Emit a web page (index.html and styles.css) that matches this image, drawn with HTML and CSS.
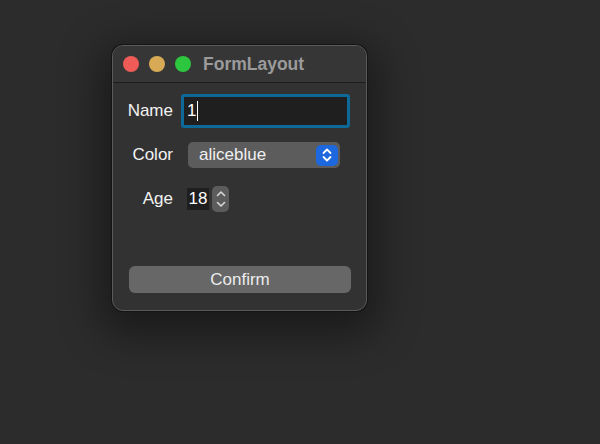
FILE: index.html
```html
<!DOCTYPE html>
<html>
<head>
<meta charset="utf-8">
<link rel="stylesheet" href="styles.css">
</head>
<body>
<div class="window">
  <div class="titlebar">
    <div class="lights">
      <span class="light red"></span>
      <span class="light yellow"></span>
      <span class="light green"></span>
    </div>
    <div class="title">FormLayout</div>
  </div>
  <div class="form">
    <label class="lbl">Name</label>
    <div class="field name-field"><span class="val">1</span><span class="caret"></span></div>
    <label class="lbl">Color</label>
    <div class="popup">
      <span class="popup-text">aliceblue</span>
      <span class="popup-btn">
        <svg width="12" height="16" viewBox="0 0 12 16"><path d="M2.5 6 L6 2.5 L9.5 6 M2.5 10 L6 13.5 L9.5 10" fill="none" stroke="#fff" stroke-width="1.8" stroke-linecap="round" stroke-linejoin="round"/></svg>
      </span>
    </div>
    <label class="lbl">Age</label>
    <div class="spin">
      <span class="spin-val">18</span>
      <span class="stepper">
        <svg width="12" height="22" viewBox="0 0 12 22"><path d="M2.5 7.5 L6 4 L9.5 7.5 M2.5 14.5 L6 18 L9.5 14.5" fill="none" stroke="#d8d8d8" stroke-width="1.6" stroke-linecap="round" stroke-linejoin="round"/></svg>
      </span>
    </div>
  </div>
  <div class="actions">
    <button class="confirm">Confirm</button>
  </div>
</div>
</body>
</html>
```
FILE: styles.css
```css
html, body {
  margin: 0;
  padding: 0;
}
body {
  width: 600px;
  height: 444px;
  background: #2c2c2c;
  font-family: "Liberation Sans", Arial, sans-serif;
  overflow: hidden;
  position: relative;
}
.window {
  position: absolute;
  left: 112px;
  top: 45px;
  width: 253px;
  height: 264px;
  background: #323232;
  border: 1px solid #5a5a5a;
  border-radius: 11px;
  box-shadow: 0 0 0 1px #141414, 0 12px 40px 12px rgba(0,0,0,0.4);
  display: flex;
  flex-direction: column;
  overflow: hidden;
}
.titlebar {
  height: 36px;
  border-bottom: 1px solid #1c1c1c;
  background: #363636;
  display: flex;
  align-items: center;
  padding-left: 10px;
}
.lights {
  display: flex;
  gap: 10px;
}
.light {
  width: 16px;
  height: 16px;
  border-radius: 50%;
  display: block;
}
.red { background: #ef5b56; }
.yellow { background: #d9aa55; }
.green { background: #2cc63f; }
.title {
  margin-left: 12px;
  color: #9b9b9b;
  font-weight: bold;
  font-size: 17.5px;
}
.form {
  display: grid;
  grid-template-columns: 60px 1fr;
  column-gap: 8px;
  padding: 11px 16px 0 0;
  align-items: center;
}
.lbl {
  justify-self: end;
  color: #f2f2f2;
  font-size: 17px;
}
.name-field {
  height: 28px;
  border: 3px solid #0d6a98;
  border-radius: 3px;
  background: #1f1f1f;
  display: flex;
  align-items: center;
  padding-left: 3px;
  color: #fff;
  font-size: 17px;
}
.caret {
  width: 1px;
  height: 20px;
  background: #fff;
  margin-left: 1px;
}
.popup {
  margin-top: 14px;
  margin-left: 7px;
  width: 152px;
  height: 26px;
  box-sizing: border-box;
  background: #5c5c5c;
  border-radius: 5px;
  display: flex;
  align-items: center;
  justify-content: space-between;
  padding: 0 2px 0 11px;
  color: #f0f0f0;
  font-size: 17px;
  grid-column: 2;
}
.form .lbl:nth-of-type(2) { margin-top: 14px; }
.popup-btn {
  width: 22px;
  height: 21px;
  background: #1d68de;
  border-radius: 5px;
  display: flex;
  align-items: center;
  justify-content: center;
}
.spin {
  margin-top: 18px;
  margin-left: 6px;
  display: flex;
  align-items: center;
  gap: 3px;
}
.form .lbl:nth-of-type(3) { margin-top: 18px; }
.spin-val {
  width: 22px;
  height: 22px;
  background: #1f1f1f;
  color: #fff;
  font-size: 17px;
  line-height: 22px;
  text-align: center;
}
.stepper {
  width: 17px;
  height: 26px;
  background: #5c5c5c;
  border-radius: 5px;
  display: flex;
  align-items: center;
  justify-content: center;
}
.actions {
  margin-top: auto;
  padding: 0 15px 17px 16px;
}
.confirm {
  width: 100%;
  height: 27px;
  border: none;
  border-radius: 6px;
  background: #676767;
  color: #ececec;
  font-family: "Liberation Sans", Arial, sans-serif;
  font-size: 17px;
  padding: 0;
  display: block;
}
```
